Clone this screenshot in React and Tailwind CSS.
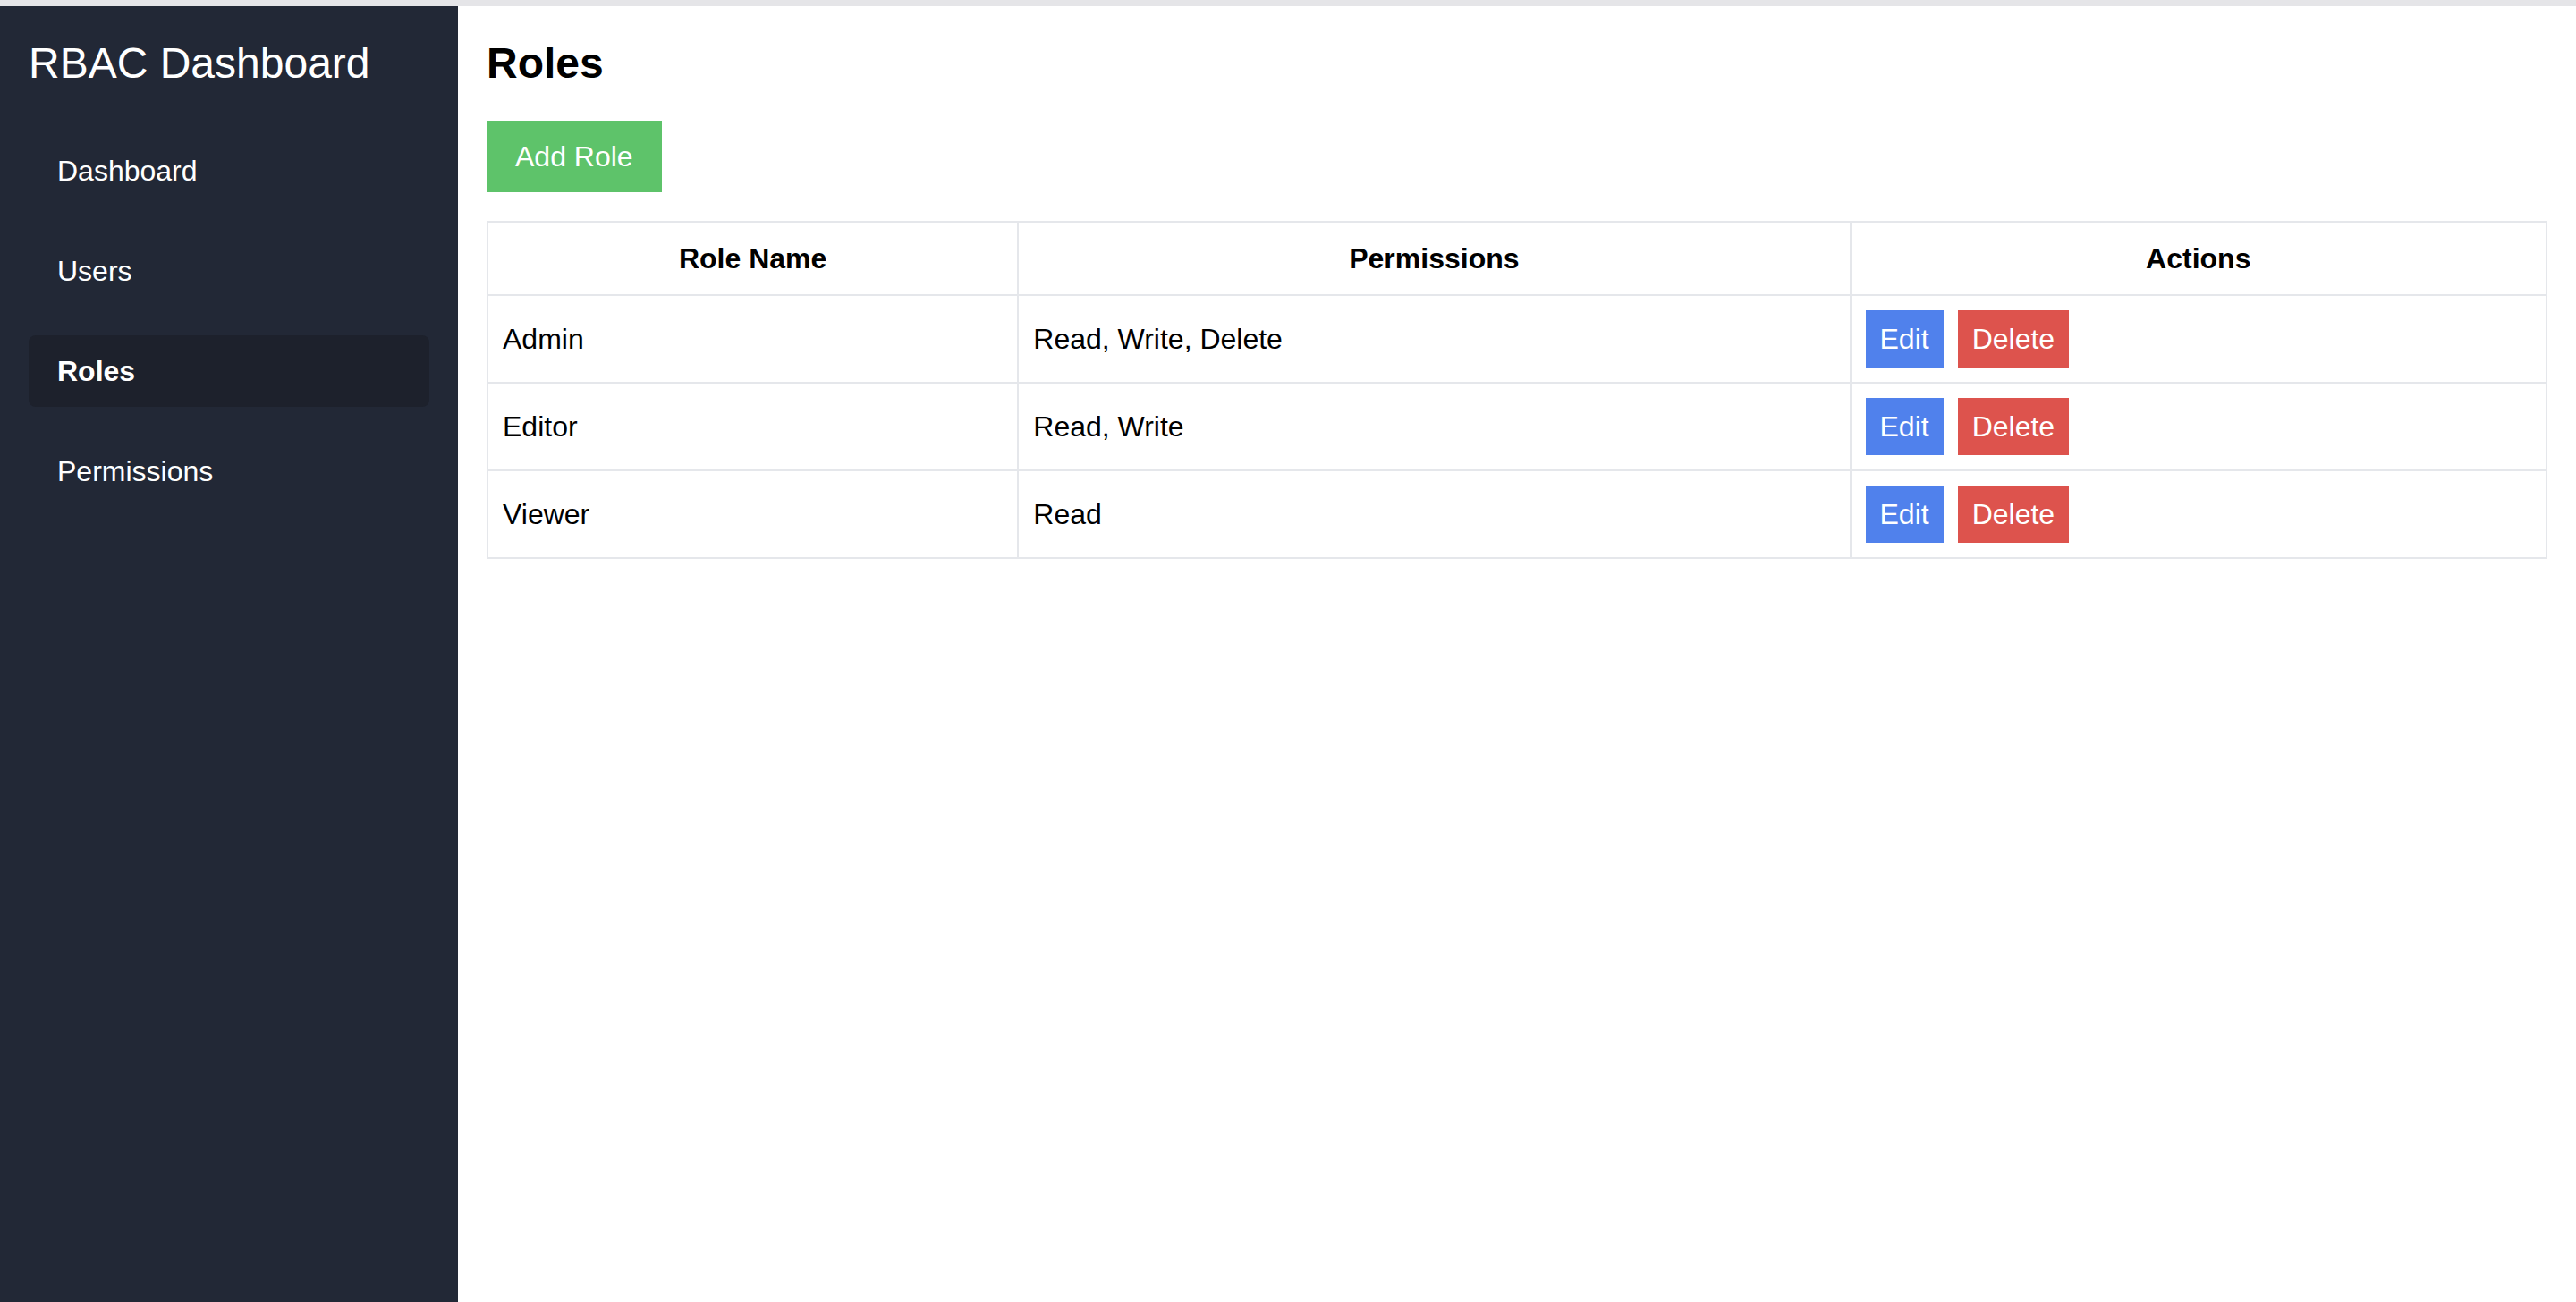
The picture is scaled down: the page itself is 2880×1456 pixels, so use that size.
import React from "react";

const roles = [
  { name: "Admin", perms: "Read, Write, Delete" },
  { name: "Editor", perms: "Read, Write" },
  { name: "Viewer", perms: "Read" },
];

const nav = [
  { label: "Dashboard", active: false },
  { label: "Users", active: false },
  { label: "Roles", active: true },
  { label: "Permissions", active: false },
];

export default function App() {
  return (
    <div className="flex h-screen flex-col font-['Liberation_Sans',Arial,sans-serif]">
      <div className="h-[7px] w-full shrink-0 bg-[#e5e5e8]" />
      <div className="flex min-h-0 flex-1">
        <aside className="w-[512px] shrink-0 bg-[#222836] p-[32px] text-white">
          <h1 className="mb-[48px] text-[48px] font-normal leading-[64px]">RBAC Dashboard</h1>
          <nav className="flex flex-col gap-[32px]">
            {nav.map((item) =>
              item.active ? (
                <div
                  key={item.label}
                  className="rounded-[8px] bg-[#1d212c] px-[32px] py-[16px] text-[32px] font-bold leading-[48px]"
                >
                  {item.label}
                </div>
              ) : (
                <div
                  key={item.label}
                  className="rounded-[8px] px-[32px] py-[16px] text-[32px] leading-[48px]"
                >
                  {item.label}
                </div>
              )
            )}
          </nav>
        </aside>
        <main className="flex-1 bg-white p-[32px] text-black">
          <h2 className="mb-[32px] text-[48px] font-bold leading-[64px]">Roles</h2>
          <button className="mb-[32px] block bg-[#5ec36a] px-[32px] py-[16px] text-[32px] leading-[48px] text-white">
            Add Role
          </button>
          <table className="w-full border-collapse border-2 border-[#e5e7eb]">
            <thead>
              <tr>
                <th className="border-2 border-[#e5e7eb] p-[16px] text-center text-[32px] font-bold leading-[48px]">
                  Role Name
                </th>
                <th className="border-2 border-[#e5e7eb] p-[16px] text-center text-[32px] font-bold leading-[48px]">
                  Permissions
                </th>
                <th className="border-2 border-[#e5e7eb] p-[16px] text-center text-[32px] font-bold leading-[48px]">
                  Actions
                </th>
              </tr>
            </thead>
            <tbody>
              {roles.map((r) => (
                <tr key={r.name}>
                  <td className="border-2 border-[#e5e7eb] p-[16px] text-left text-[32px] leading-[48px]">
                    {r.name}
                  </td>
                  <td className="border-2 border-[#e5e7eb] p-[16px] text-left text-[32px] leading-[48px]">
                    {r.perms}
                  </td>
                  <td className="border-2 border-[#e5e7eb] p-[16px] text-left text-[32px] leading-[48px]">
                    <div className="flex gap-[16px]">
                      <button className="bg-[#5081ec] px-[16px] py-[8px] text-[32px] leading-[48px] text-white">
                        Edit
                      </button>
                      <button className="bg-[#dd534d] px-[16px] py-[8px] text-[32px] leading-[48px] text-white">
                        Delete
                      </button>
                    </div>
                  </td>
                </tr>
              ))}
            </tbody>
          </table>
        </main>
      </div>
    </div>
  );
}
